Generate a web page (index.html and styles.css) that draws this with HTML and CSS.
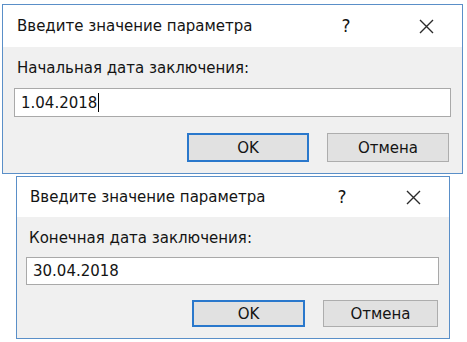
FILE: index.html
```html
<html>
	<head>
		<title>Введите значение параметра</title>
		<link rel="stylesheet" href="styles.css">
	</head>
	<body>
		<div class="dlg dlg-first">
			<div class="titlebar">
				<span class="title">Введите значение параметра</span>
				<span class="help">?</span>
				<span class="close">
					<svg width="15" height="15" viewBox="0 0 15 15"><path d="M1 1L14 14M14 1L1 14" stroke="#2b2b2b" stroke-width="1.4" fill="none"/></svg>
				</span>
			</div>
			<div class="body">
				<div class="label">Начальная дата заключения:</div>
				<div class="field">1.04.2018<span class="caret"></span></div>
				<div class="buttons">
					<div class="butt butt-ok">OK</div>
					<div class="butt">Отмена</div>
				</div>
			</div>
		</div>
		<div class="dlg dlg-second">
			<div class="titlebar">
				<span class="title">Введите значение параметра</span>
				<span class="help">?</span>
				<span class="close">
					<svg width="15" height="15" viewBox="0 0 15 15"><path d="M1 1L14 14M14 1L1 14" stroke="#2b2b2b" stroke-width="1.4" fill="none"/></svg>
				</span>
			</div>
			<div class="body">
				<div class="label">Конечная дата заключения:</div>
				<div class="field">30.04.2018</div>
				<div class="buttons">
					<div class="butt butt-ok">OK</div>
					<div class="butt">Отмена</div>
				</div>
			</div>
		</div>
	</body>
</html>
```
FILE: styles.css
```css
html, body {margin:0;padding:0;}
body {
	font-family:"DejaVu Sans", sans-serif;
	font-size:15px;
	color:#141414;
	background:#fff;
}
.dlg {
	border:1px solid #5a8fc8;
	box-sizing:border-box;
	background:#f0f0f0;
}
.dlg-first {
	width:461px;
	height:170px;
	margin:4px 0 0 2px;
}
.dlg-second {
	width:434px;
	height:163px;
	margin:2px 0 0 16px;
}
.titlebar {
	display:flex;
	align-items:center;
	background:#fff;
	height:42px;
	padding-left:14px;
}
.dlg-second .titlebar {
	height:40px;
	padding-left:13px;
}
.title {
	flex:1;
}
.help {
	width:88px;
	text-align:center;
	font-size:17px;
}
.dlg-second .help {
	width:70px;
}
.close {
	width:72px;
	display:flex;
	justify-content:center;
}
.body {
	padding:12px 11px 0 11px;
}
.dlg-second .body {
	padding:12px 10px 0 9px;
}
.label {
	padding-left:3px;
	line-height:18px;
}
.field {
	margin-top:11px;
	height:29px;
	box-sizing:border-box;
	border:1px solid #a9a9a9;
	background:#fff;
	padding-left:6px;
	display:flex;
	align-items:center;
}
.dlg-second .field {
	height:28px;
	margin-top:10px;
}
.caret {
	width:1px;
	height:19px;
	background:#000;
	margin-left:1px;
}
.buttons {
	display:flex;
	justify-content:flex-end;
	gap:18px;
	margin-top:16px;
	padding-right:2px;
}
.dlg-second .buttons {
	margin-top:15px;
	gap:18px;
	padding-right:1px;
}
.butt {
	width:122px;
	height:29px;
	box-sizing:border-box;
	border:1px solid #adadad;
	background:#e1e1e1;
	display:flex;
	align-items:center;
	justify-content:center;
}
.butt-ok {
	border:2px solid #2a78cc;
}
.dlg-second .butt {
	width:115px;
	height:27px;
}
.dlg-second .butt-ok {
	width:113px;
}
```
